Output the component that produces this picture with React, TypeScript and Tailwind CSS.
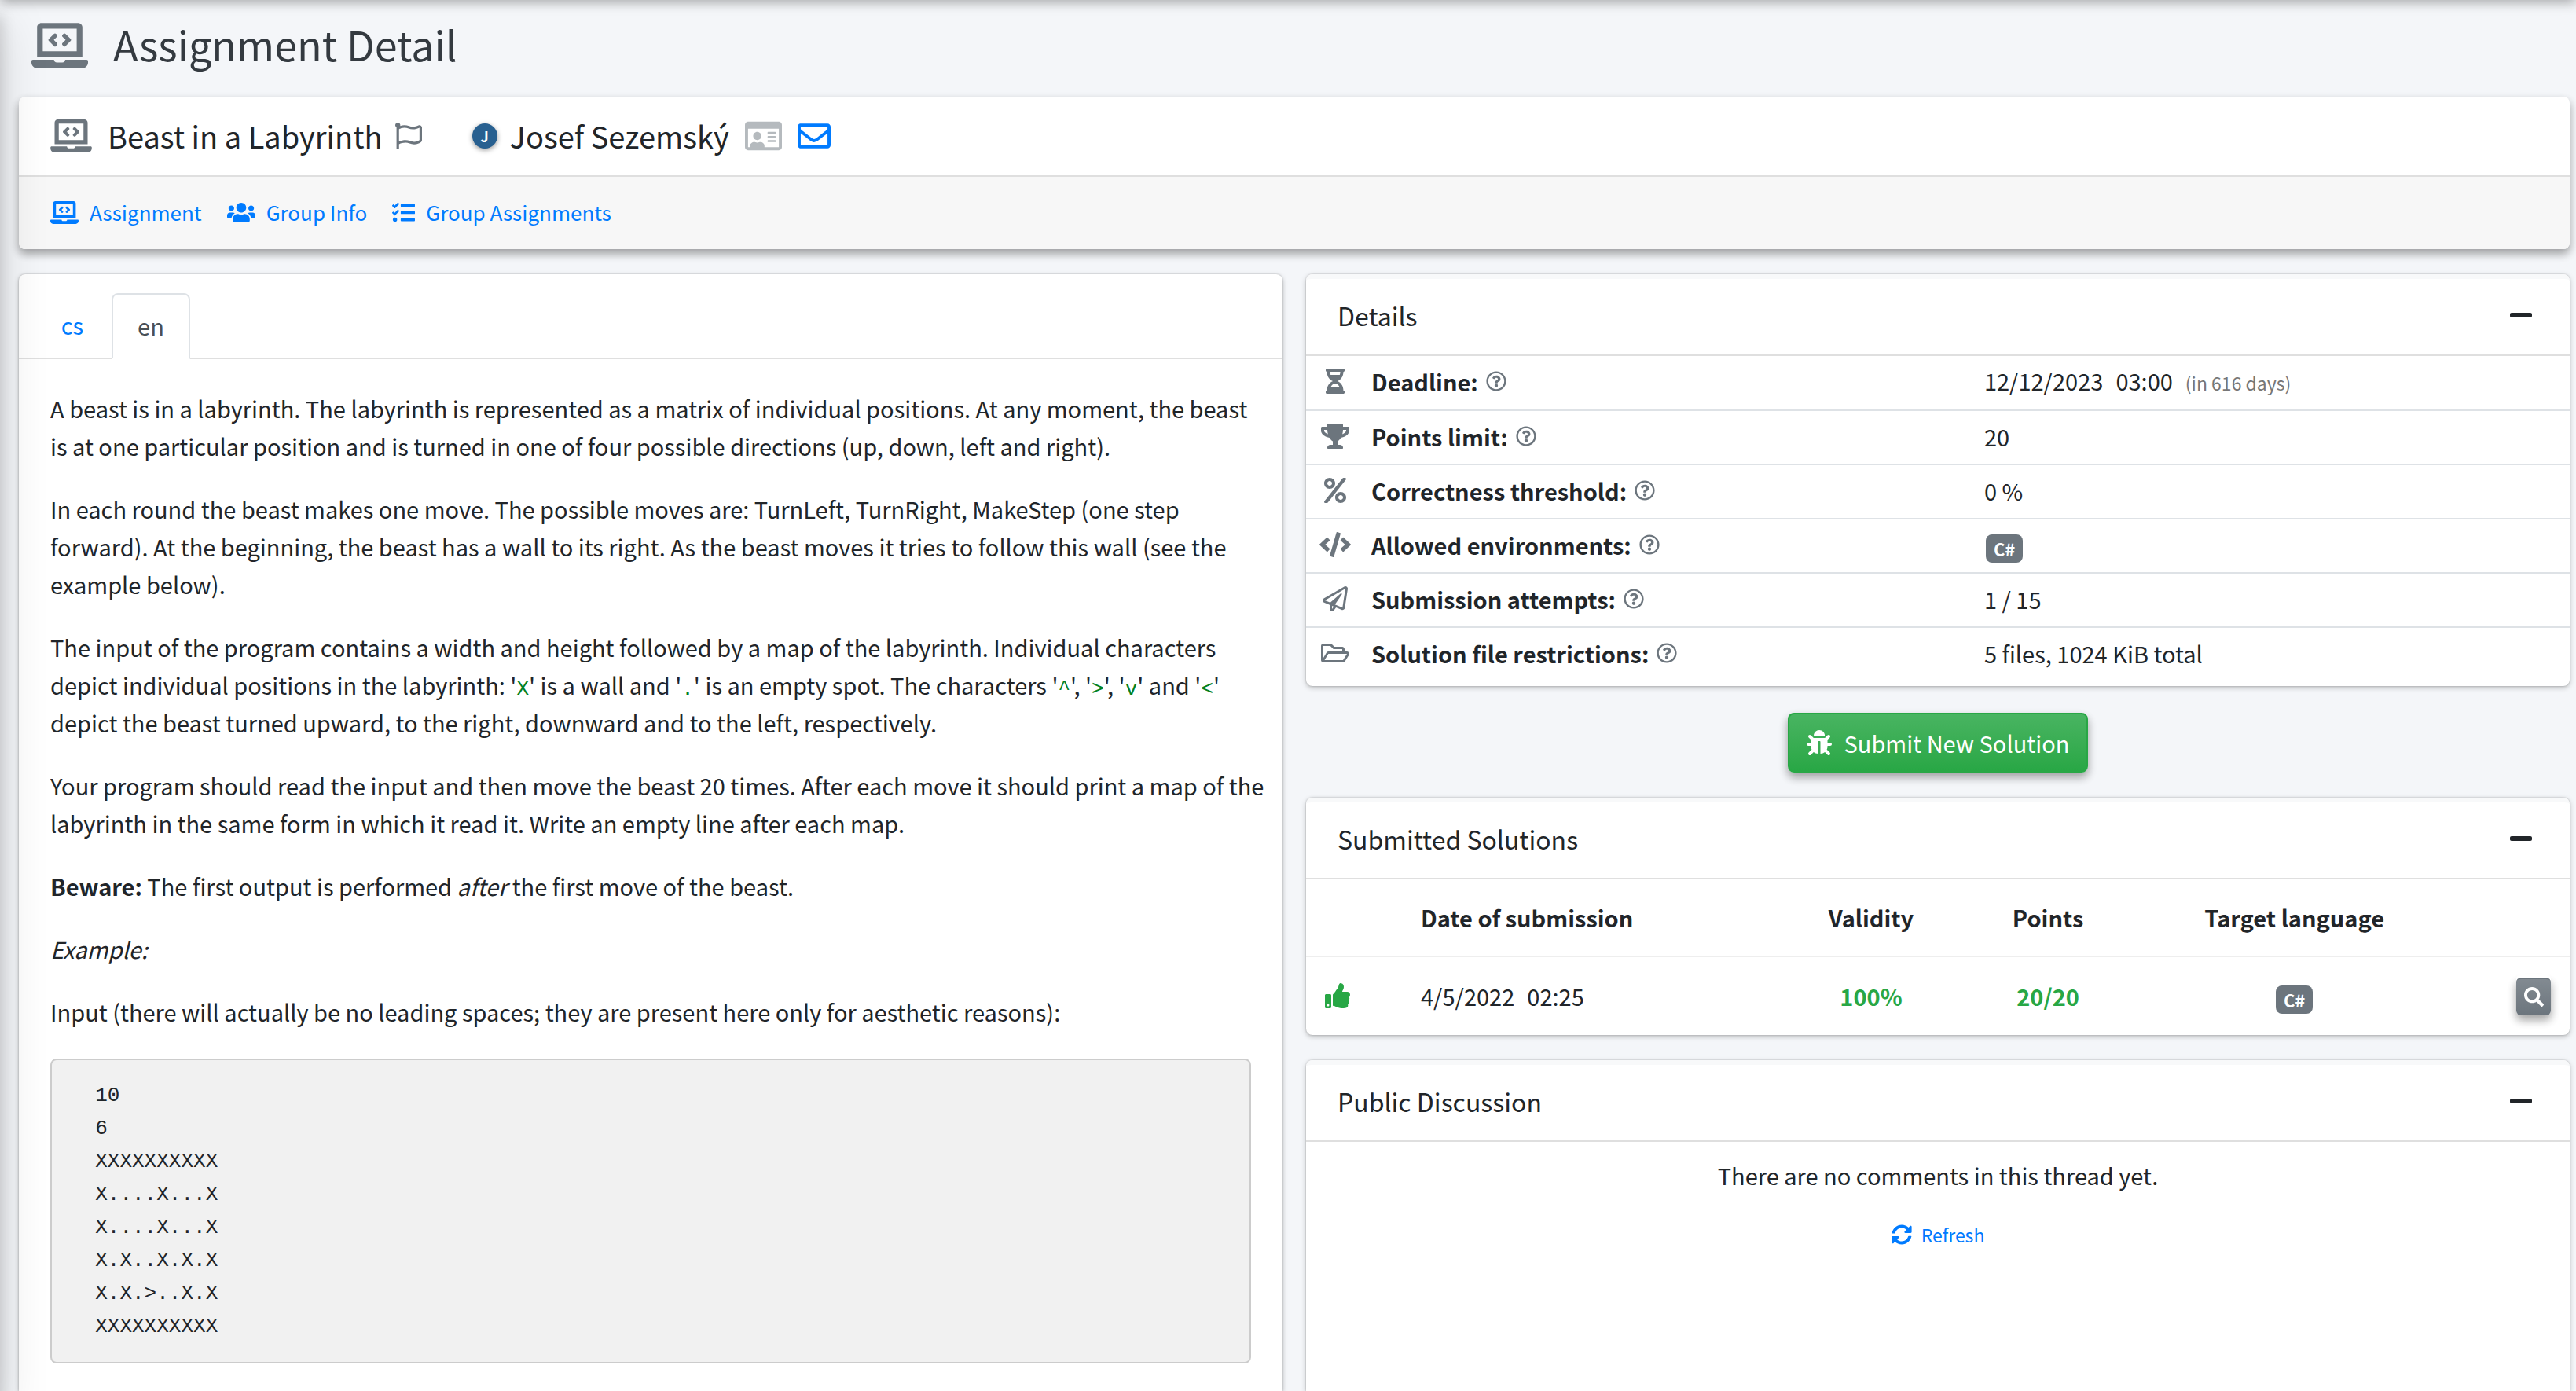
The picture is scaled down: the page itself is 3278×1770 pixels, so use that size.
import type { ReactNode } from 'react';
import {
  FaBug,
  FaCode,
  FaHourglassHalf,
  FaLaptopCode,
  FaMinus,
  FaPercent,
  FaRegEnvelope,
  FaRegFlag,
  FaRegFolderOpen,
  FaRegIdCard,
  FaRegPaperPlane,
  FaRegQuestionCircle,
  FaSearch,
  FaSyncAlt,
  FaTasks,
  FaThumbsUp,
  FaTrophy,
  FaUsers,
} from 'react-icons/fa';

const cardShadow = 'shadow-[0_0_2px_rgba(0,0,0,0.25),0_2px_6px_rgba(0,0,0,0.25)]';

function Badge({ children }: { children: ReactNode }) {
  return (
    <span className="mx-[2px] inline-block h-9 rounded-lg bg-[#6c757d] px-[10px] align-middle text-[22px] leading-9 font-bold text-white">
      {children}
    </span>
  );
}

function Code({ children }: { children: ReactNode }) {
  return <code className="font-['Liberation_Mono',monospace] text-[26px] leading-none text-[#008020]">{children}</code>;
}

function PanelHeader({ title }: { title: string }) {
  return (
    <header className="flex h-[104px] items-center justify-between rounded-t-lg border-t-[6px] border-b-2 border-t-[#f8f9fa] border-b-[#dfdfdf] pr-12 pb-1 pl-10">
      <h2 className="text-[32px] leading-12">{title}</h2>
      <button type="button" aria-label={`Collapse ${title}`} className="text-[32px]">
        <FaMinus className="h-8 w-7" />
      </button>
    </header>
  );
}

function DetailRow({ icon, label, children }: { icon: ReactNode; label: string; children: ReactNode }) {
  return (
    <tr className="h-[69px] border-b-2 border-[#dee2e6] last:border-b-0">
      <td className="pb-1 text-[32px] text-[#6c757d]">
        <span className="flex justify-center">{icon}</span>
      </td>
      <th scope="row" className="pb-1 pl-[10px] text-left font-bold">
        <span className="flex items-center gap-[10px]">
          {label}:
          <button type="button" aria-label={`Help: ${label}`} className="text-[26px] text-[#6c757d]">
            <FaRegQuestionCircle />
          </button>
        </span>
      </th>
      <td className="pb-1 pl-[10px]">{children}</td>
    </tr>
  );
}

const maze = `  10
  6
  XXXXXXXXXX
  X....X...X
  X....X...X
  X.X..X.X.X
  X.X.>..X.X
  XXXXXXXXXX`;

export default function App() {
  return (
    <div className="relative flex min-h-screen flex-col overflow-hidden bg-[#f4f6f9] pr-2 pl-6 font-['Noto_Sans_CJK_SC',sans-serif] text-[29px] leading-12 text-[#212529]">
      <div className="pointer-events-none absolute inset-y-0 -left-4 w-4 shadow-[0_28px_56px_rgba(0,0,0,0.25),0_20px_20px_rgba(0,0,0,0.22)]" />
      <div className="pointer-events-none absolute inset-x-0 -top-4 h-4 shadow-[0_2px_16px_rgba(0,0,0,0.38)]" />

      <header className="flex h-[123px] items-center gap-8 pb-2 pl-4">
        <FaLaptopCode className="h-[58px] w-[72px] text-[#6c757d]" />
        <h1 className="pb-1 text-[52px] leading-none text-[#343a40]">Assignment Detail</h1>
      </header>

      <section className="rounded-lg bg-white shadow-[0_6px_12px_rgba(0,0,0,0.16),0_6px_12px_rgba(0,0,0,0.23)]">
        <div className="flex h-[102px] items-center border-b-2 border-[#dfdfdf] px-10 text-[38px]">
          <FaLaptopCode className="mr-5 h-[42px] w-[53px] text-[#6c757d]" />
          <span>Beast in a Labyrinth</span>
          <FaRegFlag className="ml-4 size-[34px] text-[#6c757d]" />
          <span className="mr-4 ml-16 flex size-8 items-center justify-center rounded-full bg-[#286090] text-[18px] font-bold text-white shadow-[0_2px_6px_rgba(0,0,0,0.4)]">
            J
          </span>
          <span>Josef Sezemský</span>
          <FaRegIdCard className="mr-5 ml-5 h-[42px] w-[47px] text-[#b5babe]" />
          <a href="#mail" aria-label="Send e-mail" className="text-[#007bff]">
            <FaRegEnvelope className="size-[42px]" />
          </a>
        </div>
        <nav className="flex h-[92px] items-center gap-8 rounded-b-lg bg-[#f7f7f7] px-10 pb-[2px] text-[26px] text-[#007bff]">
          <a href="#assignment" className="flex items-center gap-[14px]">
            <FaLaptopCode className="h-[29px] w-9" />
            Assignment
          </a>
          <a href="#group" className="flex items-center gap-[14px]">
            <FaUsers className="h-[29px] w-9" />
            Group Info
          </a>
          <a href="#group-assignments" className="flex items-center gap-[14px]">
            <FaTasks className="size-[29px]" />
            Group Assignments
          </a>
        </nav>
      </section>

      <main className="mt-8 grid flex-1 grid-cols-2 gap-[30px]">
        <section className={`rounded-t-lg bg-white ${cardShadow}`}>
          <div className="flex h-[108px] items-end border-b-2 border-[#dfdfdf] pl-[18px]">
            <button type="button" className="h-[82px] w-[100px] pb-[2px] text-[#007bff]">
              cs
            </button>
            <button
              type="button"
              className="-mb-[2px] h-[84px] w-[100px] rounded-t-lg border-2 border-[#dee2e6] border-b-white bg-white pb-[2px] text-[#495057]"
            >
              en
            </button>
          </div>
          <article className="flex flex-col gap-8 px-10 pt-[38px] whitespace-nowrap">
            <p>
              A beast is in a labyrinth. The labyrinth is represented as a matrix of individual positions. At any moment, the beast
              <br />
              is at one particular position and is turned in one of four possible directions (up, down, left and right).
            </p>
            <p>
              In each round the beast makes one move. The possible moves are: TurnLeft, TurnRight, MakeStep (one step
              <br />
              forward). At the beginning, the beast has a wall to its right. As the beast moves it tries to follow this wall (see the
              <br />
              example below).
            </p>
            <p>
              The input of the program contains a width and height followed by a map of the labyrinth. Individual characters
              <br />
              depict individual positions in the labyrinth: '<Code>X</Code>' is a wall and '<Code>.</Code>' is an empty spot. The
              characters '<Code>^</Code>', '<Code>&gt;</Code>', '<Code>v</Code>' and '<Code>&lt;</Code>'
              <br />
              depict the beast turned upward, to the right, downward and to the left, respectively.
            </p>
            <p>
              Your program should read the input and then move the beast 20 times. After each move it should print a map of the
              <br />
              labyrinth in the same form in which it read it. Write an empty line after each map.
            </p>
            <p>
              <strong>Beware:</strong> The first output is performed <em>after</em> the first move of the beast.
            </p>
            <p>
              <em>Example:</em>
            </p>
            <p>Input (there will actually be no leading spaces; they are present here only for aesthetic reasons):</p>
            <pre className="mt-1 rounded-lg border-2 border-[#cccccc] bg-[#f1f1f1] p-6 font-['Liberation_Mono',monospace] text-[26px] leading-[42px]">
              {maze}
            </pre>
          </article>
        </section>

        <div className="flex flex-col">
          <section className={`rounded-lg bg-white pb-[6px] ${cardShadow}`}>
            <PanelHeader title="Details" />
            <table className="w-full table-fixed">
              <colgroup>
                <col className="w-[73px]" />
                <col className="w-[48.5%]" />
                <col />
              </colgroup>
              <tbody>
                <DetailRow icon={<FaHourglassHalf />} label="Deadline">
                  12/12/2023<span className="ml-4">03:00</span>
                  <span className="ml-4 text-[23px] text-[#777777]">(in 616 days)</span>
                </DetailRow>
                <DetailRow icon={<FaTrophy className="h-8 w-9" />} label="Points limit">
                  20
                </DetailRow>
                <DetailRow icon={<FaPercent />} label="Correctness threshold">
                  0 %
                </DetailRow>
                <DetailRow icon={<FaCode className="h-8 w-10" />} label="Allowed environments">
                  <Badge>C#</Badge>
                </DetailRow>
                <DetailRow icon={<FaRegPaperPlane />} label="Submission attempts">
                  1 / 15
                </DetailRow>
                <DetailRow icon={<FaRegFolderOpen className="h-8 w-9" />} label="Solution file restrictions">
                  5 files, 1024 KiB total
                </DetailRow>
              </tbody>
            </table>
          </section>

          <button
            type="button"
            className="mt-[34px] flex h-[76px] items-center gap-4 self-center rounded-lg border-2 border-[#28a745] bg-linear-to-b from-[#48b461] to-[#28a745] px-[22px] text-white shadow-[0_6px_12px_rgba(0,0,0,0.16),0_6px_12px_rgba(0,0,0,0.23)]"
          >
            <FaBug className="size-8" />
            Submit New Solution
          </button>

          <section className={`mt-8 rounded-lg bg-white ${cardShadow}`}>
            <PanelHeader title="Submitted Solutions" />
            <table className="w-full table-fixed">
              <colgroup>
                <col className="w-[124px]" />
                <col className="w-[30%]" />
                <col className="w-[14%]" />
                <col className="w-[14%]" />
                <col className="w-[25%]" />
                <col />
              </colgroup>
              <thead>
                <tr className="h-[98px] border-b-2 border-[#eeeeee]">
                  <td />
                  <th scope="col" className="pb-[2px] pl-[22px] text-left">
                    Date of submission
                  </th>
                  <th scope="col" className="pb-[2px]">Validity</th>
                  <th scope="col" className="pb-[2px]">Points</th>
                  <th scope="col" className="pb-[2px]">Target language</th>
                  <td />
                </tr>
              </thead>
              <tbody>
                <tr className="h-[100px]">
                  <td className="pb-[2px] pl-6 text-[32px] text-[#28a745]">
                    <FaThumbsUp />
                  </td>
                  <td className="pb-[2px] pl-[22px]">
                    4/5/2022<span className="ml-4">02:25</span>
                  </td>
                  <td className="pb-[2px] text-center font-bold text-[#28a745]">100%</td>
                  <td className="pb-[2px] text-center font-bold text-[#28a745]">20/20</td>
                  <td className="pb-[2px] text-center">
                    <Badge>C#</Badge>
                  </td>
                  <td className="pr-6">
                    <button
                      type="button"
                      aria-label="Show solution"
                      className="ml-auto flex h-12 w-11 items-center justify-center rounded-md border-t-2 border-[#6c757d] bg-linear-to-b from-[#828a91] to-[#6c757d] text-[25px] text-white shadow-[0_-4px_0_#ffffff,0_6px_12px_rgba(0,0,0,0.16),0_6px_12px_rgba(0,0,0,0.23)]"
                    >
                      <FaSearch />
                    </button>
                  </td>
                </tr>
              </tbody>
            </table>
          </section>

          <section className={`mt-8 flex-1 rounded-t-lg bg-white ${cardShadow}`}>
            <PanelHeader title="Public Discussion" />
            <div className="flex flex-col items-center gap-7 pt-[18px]">
              <p>There are no comments in this thread yet.</p>
              <button type="button" className="flex items-center gap-3 text-[23px] text-[#007bff]">
                <FaSyncAlt className="size-[26px]" />
                Refresh
              </button>
            </div>
          </section>
        </div>
      </main>
    </div>
  );
}
